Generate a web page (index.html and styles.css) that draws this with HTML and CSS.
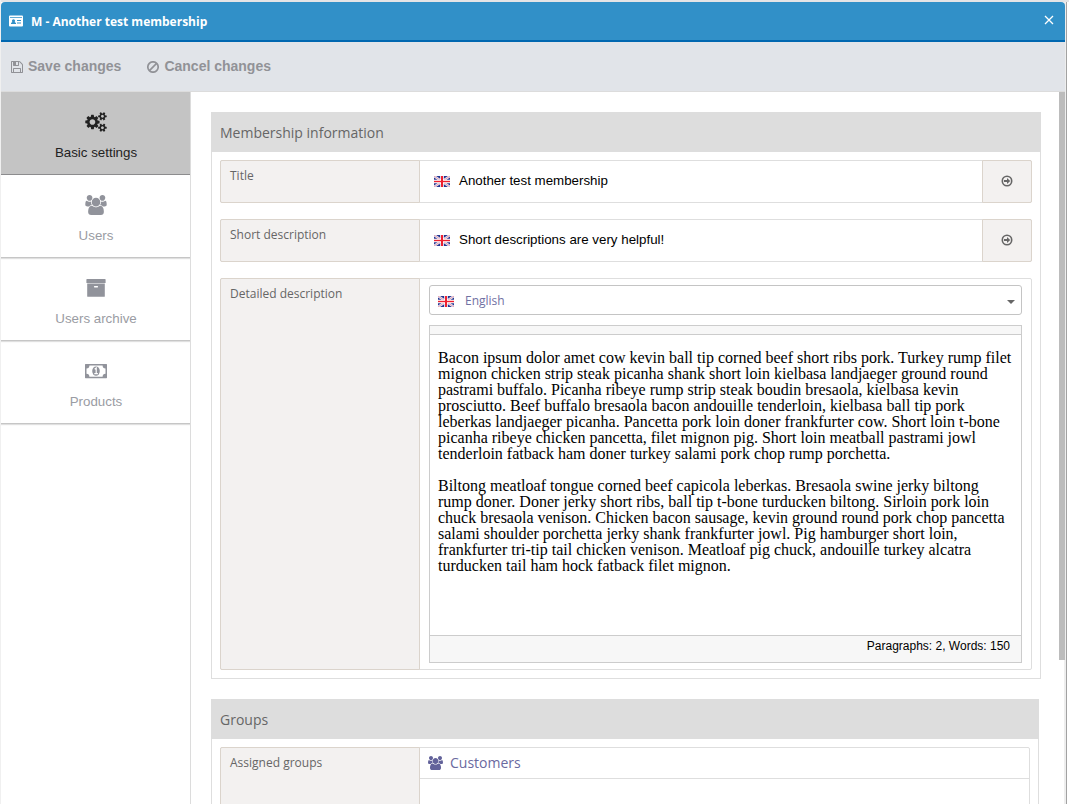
FILE: index.html
```
<!DOCTYPE html>
<html lang="en">
<head>
<meta charset="utf-8">
<title>M - Another test membership</title>
<link rel="stylesheet" href="styles.css">
</head>
<body>
<svg class="defs" width="0" height="0">
  <symbol id="users" viewBox="0 0 1920 1792"><path d="M593 896q-162 5-265 128h-134q-82 0-138-40.5t-56-118.5q0-353 124-353 6 0 43.5 21t97.5 42.5 119 21.5q67 0 133-23-5 37-5 66 0 139 81 256zm1071 637q0 120-73 189.500t-194 69.500h-874q-121 0-194-69.500t-73-189.500q0-53 3.500-103.500t14-109 26.500-108.500 43-97.500 62-81 85.500-53.500 111.500-20q10 0 43 21.500t73 48 107 48 135 21.500 135-21.500 107-48 73-48 43-21.500q61 0 111.500 20t85.500 53.500 62 81 43 97.500 26.500 108.500 14 109 3.500 103.500zm-1024-1277q0 106-75 181t-181 75-181-75-75-181 75-181 181-75 181 75 75 181zm704 384q0 159-112.500 271.500t-271.500 112.500-271.500-112.500-112.500-271.500 112.500-271.500 271.500-112.500 271.500 112.500 112.500 271.500zm576 225q0 78-56 118.500t-138 40.500h-134q-103-123-265-128 81-117 81-256 0-29-5-66 66 23 133 23 59 0 119-21.500t97.500-42.500 43.500-21q124 0 124 353zm-128-609q0 106-75 181t-181 75-181-75-75-181 75-181 181-75 181 75 75 181z"/></symbol>
  <symbol id="flag" viewBox="0 0 16 11">
    <rect width="16" height="11" fill="#24348f"/>
    <path d="M0 0L16 11M16 0L0 11" stroke="#e4e6f5" stroke-width="2.4"/>
    <path d="M0 0L16 11M16 0L0 11" stroke="#e98a98" stroke-width=".8"/>
    <path d="M8 0V11M0 5.500H16" stroke="#fff" stroke-width="3.600"/>
    <path d="M8 0V11" stroke="#ee2030" stroke-width="2"/>
    <path d="M0 5.500H16" stroke="#ee2030" stroke-width="1.400"/>
  </symbol>
  <symbol id="go" viewBox="0 0 12 12"><circle cx="6" cy="6" r="4.700" fill="none" stroke="#666" stroke-width="1.600"/><path d="M3 5.100h3V3L9.200 6 6 9V6.900H3z" fill="#666"/></symbol>
</svg>
<div class="window">
  <header class="titlebar">
    <svg class="card-icon" viewBox="0 0 14 12"><path fill="#fff" fill-rule="evenodd" d="M1 .5h12a1 1 0 0 1 1 1v9a1 1 0 0 1-1 1H1a1 1 0 0 1-1-1v-9a1 1 0 0 1 1-1zM1 2.300v.8h12v-.8zM2 8.900h5V8L5.600 7a1.600 1.600 0 1 0-2.200 0L2 8zM8 5v1h4V5zM8 7.400v1h4v-1z"/></svg>
    <span class="window-title">M - Another test membership</span>
    <svg class="close" viewBox="0 0 10 10"><path d="M1 1L9 9M9 1L1 9" stroke="#fff" stroke-width="1.300"/></svg>
  </header>
  <div class="toolbar">
    <span class="tool"><svg class="save-icon" viewBox="128 128 1536 1536"><path d="M512 1536h768v-384h-768v384zm896 0h128v-896q0-14-10-38.500t-20-34.500l-281-281q-10-10-34-20t-39-10v416q0 40-28 68t-68 28h-576q-40 0-68-28t-28-68v-416h-128v1280h128v-416q0-40 28-68t68-28h832q40 0 68 28t28 68v416zm-384-928v-320q0-13-9.500-22.500t-22.500-9.500h-192q-13 0-22.500 9.500t-9.500 22.500v320q0 13 9.500 22.500t22.500 9.500h192q13 0 22.500-9.500t9.500-22.500zm640 32v928q0 40-28 68t-68 28h-1344q-40 0-68-28t-28-68v-1344q0-40 28-68t68-28h928q40 0 88 20t76 48l280 280q28 28 48 76t20 88z"/></svg>Save changes</span>
    <span class="tool"><svg class="ban-icon" viewBox="0 0 12 12"><path d="M2.200 9.800L9.800 2.200" stroke="#919297" stroke-width="1.700"/><circle cx="6" cy="6" r="5.200" fill="none" stroke="#919297" stroke-width="1.700"/></svg>Cancel changes</span>
  </div>
  <div class="main">
    <nav class="sidebar">
      <div class="tab active"><svg class="tab-icon" viewBox="0 0 1920 1792"><path d="M896 896q0-106-75-181t-181-75-181 75-75 181 75 181 181 75 181-75 75-181zm768 512q0-52-38-90t-90-38-90 38-38 90q0 53 37.500 90.500t90.500 37.500 90.500-37.500 37.500-90.500zm0-1024q0-52-38-90t-90-38-90 38-38 90q0 53 37.500 90.500t90.500 37.500 90.500-37.500 37.500-90.500zm-384 421v185q0 10-7 19.500t-16 10.500l-155 24q-11 35-32 76 34 48 90 115 7 11 7 20 0 12-7 19-23 30-82.500 89.500t-78.500 59.500q-11 0-21-7l-115-90q-37 19-77 31-11 108-23 155-7 24-30 24h-186q-11 0-20-7.500t-10-17.500l-23-153q-34-10-75-31l-118 89q-7 7-20 7-11 0-21-8-144-133-144-160 0-9 7-19 10-14 41-53t47-61q-23-44-35-82l-152-24q-10-1-17-9.500t-7-19.500v-185q0-10 7-19.500t16-10.500l155-24q11-35 32-76-34-48-90-115-7-11-7-20 0-12 7-20 22-30 82-89t79-59q11 0 21 7l115 90q34-18 77-32 11-108 23-154 7-24 30-24h186q11 0 20 7.500t10 17.500l23 153q34 10 75 31l118-89q8-7 20-7 11 0 21 8 144 133 144 160 0 8-7 19-12 16-42 54t-45 60q23 48 34 82l152 23q10 2 17 10.500t7 19.500zm640 533v140q0 16-149 31-12 27-30 52 51 113 51 138 0 4-4 7-122 71-124 71-8 0-46-47t-52-68q-20 2-30 2t-30-2q-14 21-52 68t-46 47q-2 0-124-71-4-3-4-7 0-25 51-138-18-25-30-52-149-15-149-31v-140q0-16 149-31 13-29 30-52-51-113-51-138 0-4 4-7 4-2 35-20t59-34 30-16q8 0 46 46.500t52 67.500q20-2 30-2t30 2q51-71 92-112l6-2q4 0 124 70 4 3 4 7 0 25-51 138 17 23 30 52 149 15 149 31zm0-1024v140q0 16-149 31-12 27-30 52 51 113 51 138 0 4-4 7-122 71-124 71-8 0-46-47t-52-68q-20 2-30 2t-30-2q-14 21-52 68t-46 47q-2 0-124-71-4-3-4-7 0-25 51-138-18-25-30-52-149-15-149-31v-140q0-16 149-31 13-29 30-52-51-113-51-138 0-4 4-7 4-2 35-20t59-34 30-16q8 0 46 46.500t52 67.500q20-2 30-2t30 2q51-71 92-112l6-2q4 0 124 70 4 3 4 7 0 25-51 138 17 23 30 52 149 15 149 31z"/></svg><span>Basic settings</span></div>
      <div class="tab"><svg class="tab-icon"><use href="#users"/></svg><span>Users</span></div>
      <div class="tab"><svg class="tab-icon" viewBox="0 0 22 20"><path fill-rule="evenodd" d="M2 1h18q.6 0 .6.6V5H1.400V1.600Q1.400 1 2 1zM2.200 5.600h17.600v12.600q0 .6-.6.6H2.800q-.6 0-.6-.6zM9.600 8q-.7 0-.7.8t.7.8h2.800q.7 0 .7-.8T12.400 8z"/></svg><span>Users archive</span></div>
      <div class="tab"><svg class="tab-icon" viewBox="0 0 22 20"><path fill-rule="evenodd" d="M.6 3h20.800q.6 0 .6.6v13q0 .6-.6.6H.6q-.6 0-.6-.6v-13Q0 3 .6 3zM4.400 4.500q0 3-2.900 3v5.200q2.900 0 2.900 3h13.200q0-3 2.900-3V7.500q-2.900 0-2.900-3z"/><ellipse cx="11" cy="10.100" rx="3.800" ry="4.700"/><path d="M9.700 8.300L11.200 7v5.500M9.300 12.700h3.600" fill="none" stroke="#fff" stroke-width="1.200"/></svg><span>Products</span></div>
    </nav>
    <section class="content">
      <div class="panel">
        <h2 class="panel-title">Membership information</h2>
        <div class="panel-body">
          <div class="row short"><label class="label">Title</label><div class="value"><svg class="flag"><use href="#flag"/></svg>Another test membership</div><div class="go"><svg><use href="#go"/></svg></div></div>
          <div class="row short"><label class="label">Short description</label><div class="value"><svg class="flag"><use href="#flag"/></svg>Short descriptions are very helpful!</div><div class="go"><svg><use href="#go"/></svg></div></div>
          <div class="row detailed"><label class="label">Detailed description</label>
            <div class="editor-cell">
              <div class="select"><svg class="flag"><use href="#flag"/></svg><span>English</span><i class="caret"></i></div>
              <div class="editor">
                <div class="editor-top"></div>
                <div class="editor-text">
                  <p>Bacon ipsum dolor amet cow kevin ball tip corned beef short ribs pork. Turkey rump filet<br>mignon chicken strip steak picanha shank short loin kielbasa landjaeger ground round<br>pastrami buffalo. Picanha ribeye rump strip steak boudin bresaola, kielbasa kevin<br>prosciutto. Beef buffalo bresaola bacon andouille tenderloin, kielbasa ball tip pork<br>leberkas landjaeger picanha. Pancetta pork loin doner frankfurter cow. Short loin t-bone<br>picanha ribeye chicken pancetta, filet mignon pig. Short loin meatball pastrami jowl<br>tenderloin fatback ham doner turkey salami pork chop rump porchetta.</p>
                  <p>Biltong meatloaf tongue corned beef capicola leberkas. Bresaola swine jerky biltong<br>rump doner. Doner jerky short ribs, ball tip t-bone turducken biltong. Sirloin pork loin<br>chuck bresaola venison. Chicken bacon sausage, kevin ground round pork chop pancetta<br>salami shoulder porchetta jerky shank frankfurter jowl. Pig hamburger short loin,<br>frankfurter tri-tip tail chicken venison. Meatloaf pig chuck, andouille turkey alcatra<br>turducken tail ham hock fatback filet mignon.</p>
                </div>
                <div class="editor-status">Paragraphs: 2, Words: 150</div>
              </div>
            </div>
          </div>
        </div>
      </div>
      <div class="panel groups">
        <h2 class="panel-title">Groups</h2>
        <div class="panel-body">
          <div class="row assigned"><label class="label">Assigned groups</label>
            <div class="group-list"><div class="group"><svg><use href="#users"/></svg>Customers</div></div>
          </div>
        </div>
      </div>
    </section>
    <div class="scroll"><div class="thumb"></div></div>
  </div>
</div>
</body>
</html>
```
FILE: styles.css
```
* { box-sizing: border-box; }
body { margin: 0; height: 804px; overflow: hidden; display: flex; padding-top: 2px; border-left: 1px solid #f0f0f0; background: linear-gradient(#e4e4e6 0 2px, transparent 2px) no-repeat, linear-gradient(90deg, #fff 1064px, #eee 1064px 1066px, #a2a2a2 1066px 1067px, #fff 1067px); background-origin: padding-box; }
svg { display: block; flex: none; }
.defs { position: absolute; }
.window { width: 1064px; height: 802px; display: flex; flex-direction: column; font-family: "Liberation Sans", Arial, sans-serif; }
.titlebar { height: 40px; flex: none; display: flex; align-items: center; padding: 0 11px 0 8px; background: #3190c8; border-bottom: 2px solid #0067b0; border-radius: 4px 4px 0 0; color: #fff; }
.card-icon { width: 14px; height: 12px; }
.window-title { flex: 1; margin-left: 8px; font: bold 12px "Open Sans", sans-serif; }
.close { width: 10px; height: 10px; margin-top: -2px; }
.toolbar { height: 50px; flex: none; display: flex; gap: 26px; padding: 0 10px 2px; align-items: center; background: #e1e4e9; border-bottom: 1px solid #dcdcdc; color: #919297; font-size: 14px; font-weight: bold; }
.tool { height: 16px; display: flex; align-items: center; gap: 5px; }
.save-icon, .ban-icon { width: 12px; height: 12px; margin-top: 2px; fill: #919297; }
.main { flex: 1; display: flex; min-height: 0; overflow: hidden; }
.sidebar { width: 190px; flex: none; border-right: 1px solid #dcdcdc; }
.tab { height: 83px; display: flex; flex-direction: column; align-items: center; padding: 20px 0 0 1px; gap: 13px; font-size: 13.33px; line-height: 16px; color: #9a9ca3; fill: #91939b; border-bottom: 1px solid #c6c6c6; box-shadow: 0 1px 1px #e0e0e0; }
.tab.active { background: #c4c4c4; color: #222; fill: #222; border-color: #8c8c8e; box-shadow: none; }
.tab-icon { width: 22px; height: 20px; }
.content { flex: 1; min-width: 0; padding: 20px; display: flex; flex-direction: column; gap: 20px; }
.panel { width: 830px; height: 567px; flex: none; border: 1px solid #dedede; }
.groups { width: 828px; }
.panel-title { margin: -1px -1px 0; height: 40px; padding: 1px 9px 0; background: #ddd; color: #666; font: 14px/40px "Open Sans", sans-serif; }
.panel-body { padding: 8px; display: flex; flex-direction: column; gap: 16px; }
.row { display: flex; border: 1px solid #dedede; border-radius: 2px; }
.short { height: 43px; }
.detailed { height: 392px; }
.assigned { height: 200px; }
.label { width: 200px; flex: none; margin: -1px 0 -1px -1px; padding: 7px 9px; background: #f3f1f0; border: 1px solid #dbd4cc; border-radius: 2px 0 0 2px; color: #666; font: 12px/16px "Open Sans", sans-serif; }
.value { flex: 1; display: flex; align-items: center; gap: 9px; padding: 0 0 2px 14px; font-size: 13.33px; color: #000; }
.flag { width: 16px; height: 11px; margin-top: 2px; }
.go { width: 50px; margin: -1px; display: flex; align-items: center; justify-content: center; background: #f3f1f0; border: 1px solid #dbd4cc; border-radius: 0 2px 2px 0; }
.go svg { width: 12px; height: 12px; margin-top: -1px; }
.editor-cell { flex: 1; padding: 6px 9px; }
.select { height: 30px; display: flex; align-items: center; padding: 0 6px 0 8px; border: 1px solid #c4c4c4; border-radius: 3px; color: #7171a3; font: 12px "Open Sans", sans-serif; }
.select span { flex: 1; margin-left: 11px; }
.caret { border: 4px solid transparent; border-top-color: #666; border-bottom: 0; margin-top: 3px; }
.editor { height: 338px; margin-top: 10px; display: flex; flex-direction: column; border: 1px solid #ccc; }
.editor-top { height: 9px; background: #f7f7f7; border-bottom: 1px solid #ccc; }
.editor-text { flex: 1; padding: 15px 8px; font: 16px/16px "Liberation Serif", "Times New Roman", serif; white-space: nowrap; color: #000; }
.editor-text p { margin: 0 0 16px; }
.editor-status { height: 27px; padding: 3px 11px; text-align: right; background: #f7f7f7; border-top: 1px solid #ccc; color: #000; font-size: 12px; line-height: 15px; }
.group-list { flex: 1; }
.group { height: 31px; display: flex; align-items: center; gap: 7px; padding: 0 0 1px 8px; border-bottom: 1px solid #dedede; color: #6a6aa0; fill: #62629a; font: 14px "Open Sans", sans-serif; }
.group svg { width: 15px; height: 14px; }
.scroll { width: 6px; flex: none; }
.thumb { height: 568px; background: #bcbcbc; }
```
